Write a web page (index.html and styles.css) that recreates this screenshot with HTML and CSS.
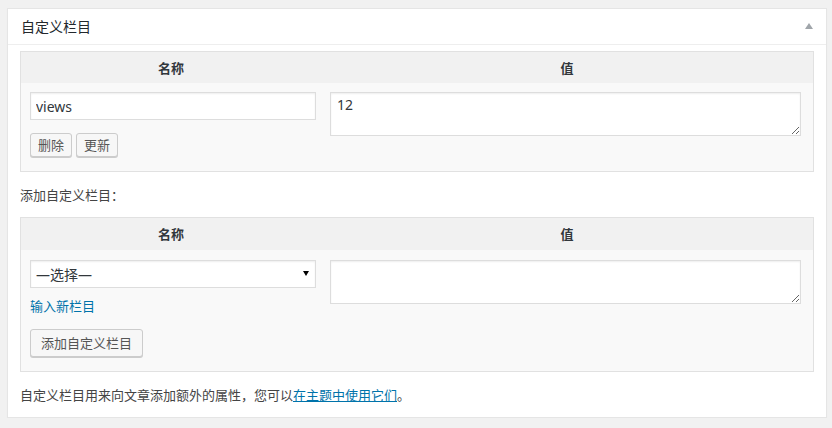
FILE: index.html
```html
<!DOCTYPE html>
<html lang="zh-CN">
<head>
<meta charset="utf-8">
<title>自定义栏目</title>
<link rel="stylesheet" href="styles.css">
</head>
<body>
<div class="postbox">
  <div class="postbox-header">
    <h2>自定义栏目</h2>
    <span class="toggle"></span>
  </div>
  <div class="inside">
    <div class="meta-table">
      <div class="meta-head"><div>名称</div><div>值</div></div>
      <div class="meta-row">
        <div class="col-key">
          <input class="field" type="text" value="views">
          <div class="btns">
            <button class="button small">删除</button>
            <button class="button small">更新</button>
          </div>
        </div>
        <div class="col-val"><textarea class="area">12</textarea></div>
      </div>
    </div>
    <p class="add-label">添加自定义栏目：</p>
    <div class="meta-table new">
      <div class="meta-head"><div>名称</div><div>值</div></div>
      <div class="meta-row new-row">
        <div class="col-key">
          <div class="select-wrap">
            <select class="select"><option>—选择—</option></select>
          </div>
          <a class="new-link" href="#">输入新栏目</a>
          <button class="button large">添加自定义栏目</button>
        </div>
        <div class="col-val"><textarea class="area"></textarea></div>
      </div>
    </div>
    <p class="note">自定义栏目用来向文章添加额外的属性，您可以<a href="#">在主题中使用它们</a>。</p>
  </div>
</div>
</body>
</html>
```
FILE: styles.css
```css
body {
  margin: 0;
  background: #f1f1f1;
  font-family: "Noto Sans", "Noto Sans CJK SC", sans-serif;
  font-size: 13px;
  color: #444;
}

.postbox {
  margin: 8px 0 0 7px;
  width: 820px;
  box-sizing: border-box;
  background: #fff;
  border: 1px solid #e5e5e5;
  box-shadow: 0 1px 1px rgba(0, 0, 0, 0.04);
}

.postbox-header {
  height: 35px;
  border-bottom: 1px solid #eee;
  display: flex;
  align-items: center;
  justify-content: space-between;
  padding: 0 13px 0 13px;
}

.postbox-header h2 {
  margin: 0;
  font-size: 14px;
  font-weight: 400;
  color: #23282d;
  line-height: 20px;
}

.toggle {
  width: 0;
  height: 0;
  border-left: 4px solid transparent;
  border-right: 4px solid transparent;
  border-bottom: 6px solid #a0a5aa;
  margin-top: -2px;
}

.inside {
  padding: 6px 12px 12px;
}

.meta-table {
  border: 1px solid #e1e1e1;
  background: #f9f9f9;
}

.meta-head {
  display: grid;
  grid-template-columns: 300px 1fr;
  align-items: center;
  height: 31px;
  background: #f1f1f1;
  font-weight: 700;
  color: #32373c;
  text-align: center;
  line-height: 20px;
}

.meta-table.new .meta-head {
  height: 32px;
}

.meta-row {
  display: grid;
  grid-template-columns: 300px 1fr;
  padding: 9px 0 14px;
}

.meta-row.new-row {
  padding: 10px 0 14px;
}

.col-key,
.col-val {
  padding-left: 9px;
}

.field,
.select,
.area {
  display: block;
  box-sizing: border-box;
  margin: 0;
  border: 1px solid #ddd;
  background: #fff;
  box-shadow: inset 0 1px 2px rgba(0, 0, 0, 0.07);
  font-family: "Noto Sans", "Noto Sans CJK SC", sans-serif;
  font-size: 14px;
  color: #32373c;
  border-radius: 0;
  outline: none;
}

.field {
  width: 286px;
  height: 28px;
  padding: 0 5px;
}

.area {
  width: 471px;
  height: 44px;
  padding: 2px 6px;
  line-height: 20px;
  resize: vertical;
}

.select-wrap {
  position: relative;
  width: 286px;
}

.select {
  width: 286px;
  height: 28px;
  padding: 0 5px;
  appearance: none;
  -webkit-appearance: none;
}

.select-wrap::after {
  content: "";
  position: absolute;
  right: 7px;
  top: 11px;
  border-left: 3px solid transparent;
  border-right: 3px solid transparent;
  border-top: 5px solid #000;
}

.btns {
  display: flex;
  gap: 4px;
  margin-top: 13px;
}

.button {
  box-sizing: border-box;
  margin: 0;
  border: 1px solid #ccc;
  background: #f7f7f7;
  border-radius: 3px;
  box-shadow: 0 1px 0 #ccc;
  color: #555;
  font-family: "Noto Sans", "Noto Sans CJK SC", sans-serif;
  font-size: 13px;
  cursor: pointer;
}

.button.small {
  height: 24px;
  padding: 0 7px;
  line-height: 22px;
}

.button.large {
  display: block;
  height: 28px;
  padding: 0 10px;
  line-height: 26px;
  margin-top: 13px;
}

.new-link {
  display: block;
  margin-top: 8px;
  line-height: 20px;
  color: #0073aa;
  text-decoration: none;
  width: max-content;
}

.add-label {
  margin: 13px 0 12px;
  line-height: 20px;
}

.note {
  margin: 13px 0 0;
  line-height: 20px;
}

.note a {
  color: #0073aa;
  text-decoration: underline;
}
```
